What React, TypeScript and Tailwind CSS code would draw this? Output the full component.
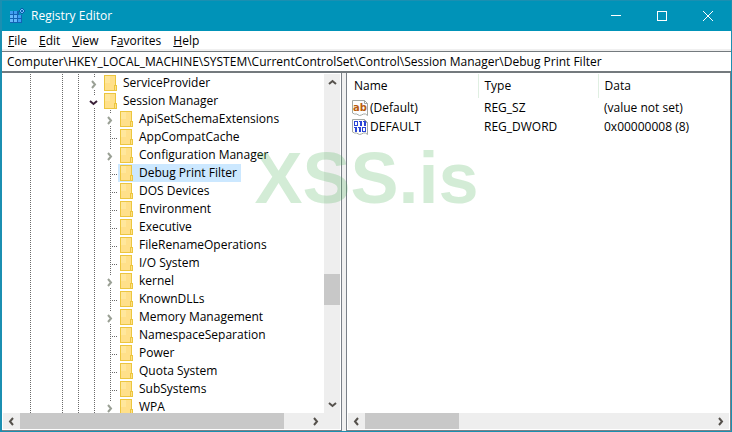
import React, { useState } from "react"

import clsx from "clsx"

interface TreeKey {
	name: string
	depth: number
	state: "leaf" | "closed" | "open"
}

const KEYS: TreeKey[] = [
	{ name: "ServiceProvider", depth: 0, state: "closed" },
	{ name: "Session Manager", depth: 0, state: "open" },
	{ name: "ApiSetSchemaExtensions", depth: 1, state: "closed" },
	{ name: "AppCompatCache", depth: 1, state: "leaf" },
	{ name: "Configuration Manager", depth: 1, state: "closed" },
	{ name: "Debug Print Filter", depth: 1, state: "leaf" },
	{ name: "DOS Devices", depth: 1, state: "leaf" },
	{ name: "Environment", depth: 1, state: "leaf" },
	{ name: "Executive", depth: 1, state: "leaf" },
	{ name: "FileRenameOperations", depth: 1, state: "leaf" },
	{ name: "I/O System", depth: 1, state: "leaf" },
	{ name: "kernel", depth: 1, state: "closed" },
	{ name: "KnownDLLs", depth: 1, state: "leaf" },
	{ name: "Memory Management", depth: 1, state: "closed" },
	{ name: "NamespaceSeparation", depth: 1, state: "leaf" },
	{ name: "Power", depth: 1, state: "leaf" },
	{ name: "Quota System", depth: 1, state: "leaf" },
	{ name: "SubSystems", depth: 1, state: "leaf" },
	{ name: "WPA", depth: 1, state: "closed" }
]

const VALUES = [
	{ name: "(Default)", type: "REG_SZ", data: "(value not set)", text: true },
	{ name: "DEFAULT", type: "REG_DWORD", data: "0x00000008 (8)", text: false }
]

// [before, accelerator, after]
const MENUS = [
	["", "F", "ile"],
	["", "E", "dit"],
	["", "V", "iew"],
	["F", "a", "vorites"],
	["", "H", "elp"]
]

function AppIcon() {
	return (
		<svg width="16" height="16" viewBox="0 0 16 16" shapeRendering="crispEdges">
			<path fill="#1263b4" d="M1 3h9v4h3v8H1z" />
			<path fill="#3f9df2" d="M1 3h3v3H1zM5 3h3v3H5zM9 7h3v3H9zM9 11h3v3H9z" />
			<path fill="#66b8fb" d="M1 7h3v3H1zM5 7h3v3H5zM1 11h3v3H1zM5 11h3v3H5z" />
			<path fill="#0a5aa8" d="M12 0h2v1h1v1h1v2h-1v1h-1v1h-2V5h-1V4h-1V2h1V1h1z" />
			<path fill="#6cc0fa" d="M12 1h2v1h1v2h-1v1h-2V4h-1V2h1z" />
			<path fill="#1263b4" d="M12 2h2v2h-2z" />
		</svg>
	)
}

function FolderIcon() {
	return (
		<svg width="13" height="16" viewBox="0 0 13 16" shapeRendering="crispEdges" className="shrink-0">
			<path fill="#ecc63f" d="M0 0h12v10h1v6H0z" />
			<path fill="#ffe08a" d="M1 1h10v14H1z" />
			<path fill="#ffe79c" d="M1 1h5v7H1z" />
			<path fill="#ecc63f" d="M10 10h3v6h-3z" />
			<path fill="#ffe08a" d="M11 11h1v4h-1z" />
		</svg>
	)
}

function ValueIcon({ text }: { text: boolean }) {
	return (
		<svg width="16" height="16" viewBox="0 0 16 16" className="shrink-0">
			<path
				fill="#fdfdfd"
				stroke="#a3a8a4"
				d="M.5.5h12l3 3v12l-2-1.500h-2l-2 1-2 .5-3-1.500h-2l-2-1z"
			/>
			<path fill="none" stroke="#a3a8a4" d="M12.500.5v3h3" />
			{text ? (
				<text
					x="1"
					y="11"
					fill="#b85c10"
					className="font-['DejaVu_Sans',sans-serif] text-[10px] font-bold"
				>
					ab
				</text>
			) : (
				<g fill="#2a44d6" fillRule="evenodd" shapeRendering="crispEdges">
					<path d="M2 2h4v5H2zM3 3v3h2V3zM7 2h3v5H8V3H7zM11 2h3v5h-2V3h-1z" />
					<path d="M2 8h3v5H3V9H2zM6 8h3v5H7V9H6zM10 8h4v5h-4zM11 9v3h2V9z" />
				</g>
			)}
		</svg>
	)
}

const CHEVRONS = {
	right: "M3 1l3 3.500L3 8",
	left: "M6 1L3 4.500L6 8",
	up: "M1 6l3.500-3L8 6",
	down: "M1 3l3.500 3L8 3"
}

function Chevron({ dir, className }: { dir: keyof typeof CHEVRONS; className?: string }) {
	return (
		<svg width="9" height="9" viewBox="0 0 9 9" className={className}>
			<path fill="none" stroke="currentColor" strokeWidth="2" d={CHEVRONS[dir]} />
		</svg>
	)
}

type Guide = "none" | "line" | "tee" | "stub"

function GuideCell({ kind }: { kind: Guide }) {
	return (
		<svg width="16" height="18" viewBox="0 0 16 18" shapeRendering="crispEdges" className="shrink-0">
			<g stroke="#6a6a6a" strokeDasharray="1 1">
				{(kind === "line" || kind === "tee") && <path d="M8.500 0v18" />}
				{kind === "tee" && <path d="M10 10.500h5" />}
				{kind === "stub" && <path d="M8.500 0v4M8.500 16v2" />}
			</g>
		</svg>
	)
}

function Expander({ open, name, onToggle }: { open: boolean; name: string; onToggle: () => void }) {
	return (
		<button
			type="button"
			aria-label={open ? `Collapse ${name}` : `Expand ${name}`}
			onClick={onToggle}
			className="relative flex h-[18px] w-4 shrink-0"
		>
			<GuideCell kind="stub" />
			<span className="absolute inset-0 flex items-center justify-center pt-[2px] pr-px">
				{open ? (
					<Chevron dir="down" className="text-[#3a2038]" />
				) : (
					<Chevron dir="right" className="text-[#9aa095]" />
				)}
			</span>
		</button>
	)
}

interface ScrollBarProps {
	vertical?: boolean
	start: number
	size: number
}

// start and size are percentages of the track
function ScrollBar({ vertical, start, size }: ScrollBarProps) {
	const arrow = clsx(
		"flex shrink-0 items-center justify-center text-[#55514c]",
		vertical ? "h-[17px] w-full" : "h-full w-[17px]"
	)
	return (
		<div className={clsx("flex bg-[#eeeeee]", vertical ? "w-4 shrink-0 flex-col" : "h-4 flex-1")}>
			<button type="button" aria-label={vertical ? "Scroll up" : "Scroll left"} className={arrow}>
				<Chevron dir={vertical ? "up" : "left"} />
			</button>
			<div className={clsx("flex flex-1", vertical ? "flex-col" : "flex-row")}>
				<div style={{ flexBasis: `${start}%` }} />
				<div className="bg-[#c8c8c8]" style={{ flexBasis: `${size}%` }} />
			</div>
			<button type="button" aria-label={vertical ? "Scroll down" : "Scroll right"} className={arrow}>
				<Chevron dir={vertical ? "down" : "right"} />
			</button>
		</div>
	)
}

function TitleBar() {
	const button = "flex w-[46px] items-center justify-center hover:bg-white/20"
	return (
		<header className="flex h-[30px] shrink-0 bg-[#0093b8] text-white">
			<div className="flex flex-1 items-center gap-[6px] pl-[7px]">
				<AppIcon />
				<h1>Registry Editor</h1>
			</div>
			<button type="button" aria-label="Minimize" className={button}>
				<svg width="10" height="10" shapeRendering="crispEdges">
					<path stroke="currentColor" d="M0 4.500h10" />
				</svg>
			</button>
			<button type="button" aria-label="Maximize" className={button}>
				<svg width="10" height="10" shapeRendering="crispEdges">
					<path fill="none" stroke="currentColor" d="M.5.5h9v9h-9z" />
				</svg>
			</button>
			<button type="button" aria-label="Close" className={button}>
				<svg width="10" height="10">
					<path stroke="currentColor" d="M0 0l10 10M10 0L0 10" />
				</svg>
			</button>
		</header>
	)
}

function KeyTree() {
	const [selected, setSelected] = useState("Debug Print Filter")
	const [open, setOpen] = useState(true)

	const rows = open ? KEYS : KEYS.filter((k) => k.depth === 0)

	return (
		<ul className="h-0 min-h-full flex-1 overflow-hidden pl-[19px]">
			{rows.map((key) => {
				const isOpen = key.state === "open" && open
				return (
					<li key={key.name} className="flex h-[18px]">
						<GuideCell kind="line" />
						<GuideCell kind="none" />
						<GuideCell kind="line" />
						<GuideCell kind="line" />
						{key.depth === 1 && <GuideCell kind="line" />}
						{key.state === "leaf" ? (
							<GuideCell kind="tee" />
						) : (
							<Expander
								open={isOpen}
								name={key.name}
								onToggle={() => key.name === "Session Manager" && setOpen(!open)}
							/>
						)}
						<button
							type="button"
							onClick={() => setSelected(key.name)}
							className={clsx(
								"flex items-center gap-[6px] pr-1 pl-[2px] whitespace-nowrap",
								selected === key.name && "bg-[#cce8ff]"
							)}
						>
							<FolderIcon />
							{key.name}
						</button>
					</li>
				)
			})}
		</ul>
	)
}

function ValueList() {
	return (
		<div className="min-h-0 flex-1 overflow-hidden">
			<table className="w-full table-fixed border-collapse text-left">
				<thead>
					<tr className="h-6">
						<th className="w-[130px] border-r border-[#e0efe2] pl-[6px] font-normal">Name</th>
						<th className="w-[120px] border-r border-[#e0efe2] pl-[6px] font-normal">Type</th>
						<th className="pl-[6px] font-normal">Data</th>
					</tr>
				</thead>
				<tbody>
					{VALUES.map((value) => (
						<tr key={value.name} className="h-[19px]">
							<td className="pl-1">
								<span className="flex items-center gap-[2px]">
									<ValueIcon text={value.text} />
									{value.name}
								</span>
							</td>
							<td className="pl-[6px]">{value.type}</td>
							<td className="pl-[6px]">{value.data}</td>
						</tr>
					))}
				</tbody>
			</table>
		</div>
	)
}

export default function App() {
	const [path, setPath] = useState(
		"Computer\\HKEY_LOCAL_MACHINE\\SYSTEM\\CurrentControlSet\\Control\\Session Manager\\Debug Print Filter"
	)

	return (
		<div className="relative flex h-screen flex-col border border-l-2 border-[#1b8fb1] bg-[#f0f0f0] font-['Open_Sans',sans-serif] text-[12px] leading-4 text-black">
			<TitleBar />

			<nav className="flex h-[18px] shrink-0 items-center gap-3 bg-white pt-px pl-[6px]">
				{MENUS.map(([before, accel, after]) => (
					<button type="button" key={before + accel + after}>
						{before}
						<u>{accel}</u>
						{after}
					</button>
				))}
			</nav>

			{/* Address bar */}
			<div className="mt-[2px] flex h-[22px] shrink-0 border-t border-b-2 border-[#747a7e] bg-white">
				<input
					type="text"
					aria-label="Registry path"
					value={path}
					onChange={(e) => setPath(e.target.value)}
					className="w-full px-[5px] outline-none"
				/>
			</div>

			<main className="flex min-h-0 flex-1">
				<section className="flex w-[340px] shrink-0 flex-col border-r border-b border-[#7a8088] bg-white pr-px pb-px pl-px">
					<div className="flex min-h-0 flex-1 pt-px">
						<KeyTree />
						<ScrollBar vertical start={60} size={10} />
					</div>
					<div className="flex">
						<ScrollBar start={0} size={92} />
						<div className="w-4 bg-[#eeeeee]" />
					</div>
				</section>

				<section className="ml-1 flex min-w-0 flex-1 flex-col border-x border-b border-[#7a8088] bg-white px-px pt-px pb-px">
					<ValueList />
					<div className="flex">
						<ScrollBar start={0} size={27} />
					</div>
				</section>
			</main>

			{/* Watermark */}
			<div className="pointer-events-none absolute inset-0 flex items-center justify-center font-['Liberation_Sans',sans-serif] text-[72px] leading-none font-bold text-[#4fb45c]/25">
				<span className="pb-[76px]">XSS.is</span>
			</div>
		</div>
	)
}
